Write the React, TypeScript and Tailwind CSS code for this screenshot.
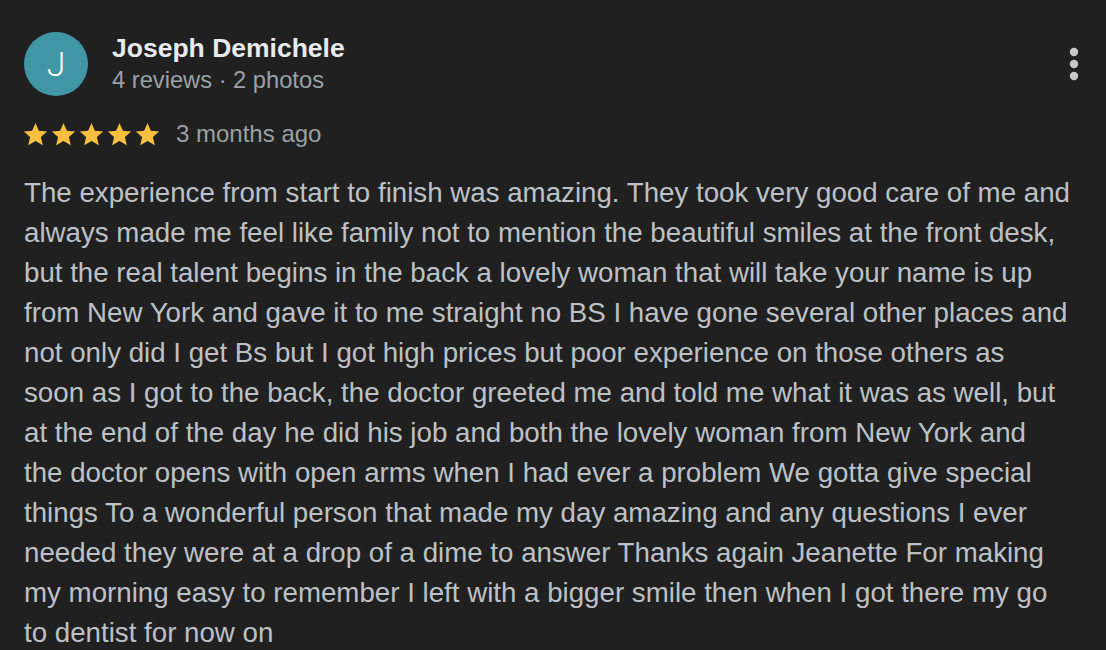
const lines = [
  "The experience from start to finish was amazing. They took very good care of me and",
  "always made me feel like family not to mention the beautiful smiles at the front desk,",
  "but the real talent begins in the back a lovely woman that will take your name is up",
  "from New York and gave it to me straight no BS I have gone several other places and",
  "not only did I get Bs but I got high prices but poor experience on those others as",
  "soon as I got to the back, the doctor greeted me and told me what it was as well, but",
  "at the end of the day he did his job and both the lovely woman from New York and",
  "the doctor opens with open arms when I had ever a problem We gotta give special",
  "things To a wonderful person that made my day amazing and any questions I ever",
  "needed they were at a drop of a dime to answer Thanks again Jeanette For making",
  "my morning easy to remember I left with a bigger smile then when I got there my go",
  "to dentist for now on",
];

function Star() {
  return (
    <svg width="27" height="27" viewBox="0 0 24 24">
      <path
        fill="#f6bf3f"
        d="M12 1.8l3 6.9 7.4.7-5.6 4.9 1.7 7.3L12 17.8l-6.5 3.8 1.7-7.3-5.6-4.9 7.4-.7z"
      />
    </svg>
  );
}

function MoreIcon() {
  return (
    <svg width="10" height="34" viewBox="0 0 10 34" fill="#c8c8c8">
      <circle cx="5" cy="5" r="4.2" />
      <circle cx="5" cy="17" r="4.2" />
      <circle cx="5" cy="29" r="4.2" />
    </svg>
  );
}

export default function App() {
  return (
    <div className="min-h-[650px] w-full overflow-hidden bg-[#202020] pl-6 pr-4 pt-8 font-['Liberation_Sans',Arial,sans-serif]">
      <div className="flex items-start justify-between">
        <div className="flex items-start gap-6">
          <div className="flex h-16 w-16 items-center justify-center rounded-full bg-[#4196a6] font-['Roboto',sans-serif] text-[34px] font-light text-white">
            J
          </div>
          <div className="flex flex-col">
            <div className="text-[26.5px] font-bold leading-[32px] text-[#e8eaed]">
              Joseph Demichele
            </div>
            <div className="mt-[2px] text-[23.7px] leading-[28px] text-[#9aa0a6]">
              4 reviews · 2 photos
            </div>
          </div>
        </div>
        <button className="mr-[11px] mt-[15px]" aria-label="More">
          <MoreIcon />
        </button>
      </div>

      <div className="mt-6 flex items-center gap-[15px]">
        <div className="-ml-[2px] flex gap-[1px]">
          {[0, 1, 2, 3, 4].map((i) => (
            <Star key={i} />
          ))}
        </div>
        <span className="text-[24px] leading-[28px] text-[#9aa0a6]">
          3 months ago
        </span>
      </div>

      <p className="mt-[25px] whitespace-nowrap text-[27.7px] leading-[40px] text-[#bdc1c6]">
        {lines.map((line, i) => (
          <span key={i}>
            {line}
            {i < lines.length - 1 && <br />}
          </span>
        ))}
      </p>
    </div>
  );
}
